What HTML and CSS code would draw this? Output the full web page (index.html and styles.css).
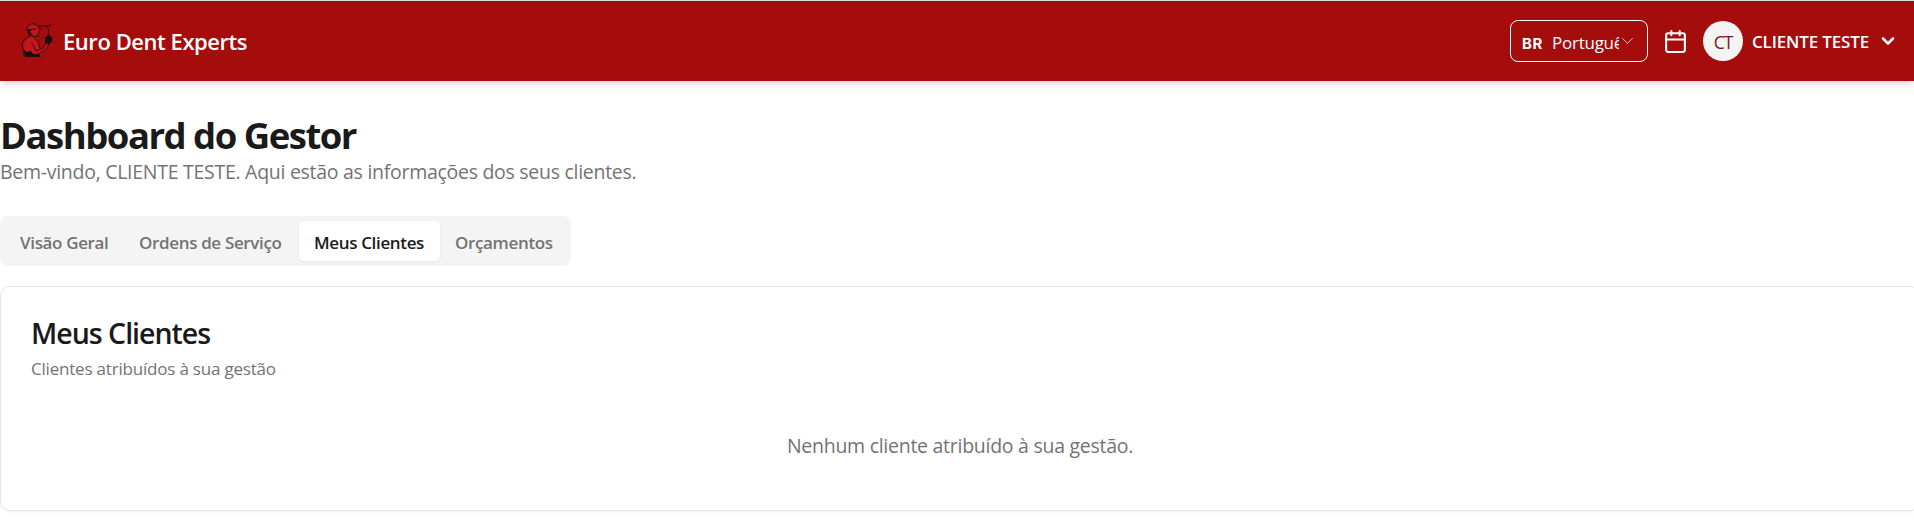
FILE: index.html
```html
<!DOCTYPE html>
<html lang="pt-BR">
<head>
<meta charset="utf-8">
<title>Euro Dent Experts</title>
<link rel="stylesheet" href="styles.css">
</head>
<body>
<header class="header">
  <div class="brand">
    <svg class="logo" viewBox="0 0 34 38" fill="none">
      <path d="M4 34 3 27 2 22 5 18 10 14 15 15 18 20 20 28 25 23 27 17 29 19 25 28 19 33 17 35Z" fill="#c5141b"/>
      <path d="M7 6 9 3 14 2 18 5 18 8 17 12 13 14 8 11Z" fill="#c5141b"/>
      <path d="M6 8C6 3 10 1 13 2 16 2 18 5 18 7L21 7M6 8 15 7M7 9 8 13 14 15 17 14 18 9M9 14 4 17 1 22 2 27 3 33M13 16 17 19 19 26M11 21 15 29 22 26 26 20M17 32 23 29 27 24 29 19M18 4 28 4 30 3M26 4C28 8 28 10 27 13" stroke="#2c1013" stroke-width="1"/>
      <path d="M2 26 5 30 10 29 12 32 18 32 20 35H4ZM24 16 28 12 29 14 31 15 31 20 28 22 24 21ZM7 8 10 8 9 10 12 13 8 12Z" fill="#190f12"/>
    </svg>
    <span class="brand-name">Euro Dent Experts</span>
  </div>
  <div class="actions">
    <div class="language">
      <span class="country">BR</span>
      <span class="language-name">Português</span>
      <svg class="select-arrow" viewBox="0 0 24 24"><path d="m4 7 8 8 8-8"/></svg>
    </div>
    <svg class="calendar" viewBox="0 0 24 24"><rect x="3" y="4" width="18" height="18" rx="2"/><path d="M8 2v4M16 2v4M3 10h18"/></svg>
    <div class="user">
      <span class="avatar">CT</span>
      <span class="user-name">CLIENTE TESTE</span>
      <svg class="user-arrow" viewBox="0 0 24 24"><path d="m6 9 6 6 6-6"/></svg>
    </div>
  </div>
</header>
<main class="main">
  <h1 class="title">Dashboard do Gestor</h1>
  <p class="welcome">Bem-vindo, CLIENTE TESTE. Aqui estão as informações dos seus clientes.</p>
  <nav class="tabs">
    <span class="tab tab-overview">Visão Geral</span>
    <span class="tab tab-orders">Ordens de Serviço</span>
    <span class="tab tab-clients active">Meus Clientes</span>
    <span class="tab tab-quotes">Orçamentos</span>
  </nav>
  <section class="card">
    <h2 class="card-title">Meus Clientes</h2>
    <p class="card-subtitle">Clientes atribuídos à sua gestão</p>
    <p class="empty">Nenhum cliente atribuído à sua gestão.</p>
  </section>
</main>
</body>
</html>
```
FILE: styles.css
```css
* { box-sizing: border-box; }
body {
  margin: 0;
  height: 523px;
  overflow: hidden;
  background: #fff;
  color: #1a1a1a;
  font-family: "Open Sans", "Noto Sans", sans-serif;
}
h1, h2, p { margin: 0; font-weight: 400; white-space: nowrap; }
svg { flex: none; fill: none; stroke-linecap: round; stroke-linejoin: round; }
.header {
  display: flex;
  justify-content: space-between;
  align-items: center;
  height: 81px;
  padding: 0 16px 0 21px;
  border-top: 1px solid #dadada;
  background: #a50c0c;
  color: #fff;
  box-shadow: 0 5px 8px -1px rgba(0, 0, 0, .1), 0 2px 5px -2px rgba(0, 0, 0, .1);
}
.brand { display: flex; align-items: center; gap: 8px; }
.logo { width: 34px; height: 38px; }
.brand-name { font-size: 22px; font-weight: 600; line-height: 30px; letter-spacing: -.45px; white-space: nowrap; }
.actions { display: flex; align-items: center; }
.language {
  display: flex;
  align-items: center;
  width: 138px;
  height: 42px;
  padding: 0 10px;
  border: 1px solid #fff;
  border-radius: 8px;
  font-size: 17px;
}
.country { width: 31px; padding: 4px 0 0 1px; font-family: Inter, sans-serif; font-size: 15px; font-weight: 700; letter-spacing: .5px; }
.language-name { width: 67px; overflow: hidden; letter-spacing: -.25px; padding-top: 2px; }
.select-arrow { width: 15px; height: 15px; margin-left: 1px; stroke: #fff; stroke-width: 1.6; opacity: .7; }
.calendar { width: 25px; height: 25px; margin: 0 15px 0 15px; stroke: #fff; stroke-width: 2; }
.user { display: flex; align-items: center; }
.avatar {
  display: grid;
  place-items: center;
  width: 40px;
  height: 40px;
  padding-top: 2px;
  border-radius: 50%;
  background: #f4f4f4;
  color: #7e1620;
  font-size: 17.5px;
  font-weight: 400;
  letter-spacing: -1px;
}
.user-name { width: 118px; margin-left: 9px; padding-top: 1px; font-size: 17px; font-weight: 600; letter-spacing: -.15px; white-space: nowrap; }
.user-arrow { width: 20px; height: 20px; margin-left: 8px; stroke: #fff; stroke-width: 3; }
.main { width: 1920px; padding-top: 29px; }
.title { font-size: 36.5px; font-weight: 700; line-height: 50px; letter-spacing: -1.5px; }
.welcome { margin-top: 1px; font-size: 19.5px; line-height: 22px; color: #737373; letter-spacing: -.28px; }
.tabs {
  display: flex;
  width: 571px;
  height: 50px;
  margin-top: 33px;
  padding: 5px;
  border-radius: 8px;
  background: #f4f4f4;
  color: #737373;
  font-size: 17px;
  font-weight: 600;
  letter-spacing: -.35px;
}
.tab { height: 40px; padding-left: 15px; line-height: 43px; border-radius: 5px; white-space: nowrap; }
.tab-overview { width: 119px; }
.tab-orders { width: 175px; }
.tab-clients { width: 141px; }
.tab-quotes { width: 126px; }
.active { background: #fff; color: #1a1a1a; box-shadow: 0 1px 3px rgba(0, 0, 0, .06); }
.card {
  height: 225px;
  margin-top: 20px;
  padding: 28px 30px;
  border: 1px solid #e5e5e5;
  border-radius: 10px;
  box-shadow: 0 1px 3px rgba(0, 0, 0, .05);
}
.card-title { font-size: 28.5px; font-weight: 600; line-height: 36px; letter-spacing: -1px; }
.card-subtitle { margin-top: 5px; font-size: 17px; line-height: 25px; color: #737373; letter-spacing: -.2px; }
.empty { margin-top: 50px; text-align: center; font-size: 19.5px; line-height: 30px; color: #737373; letter-spacing: -.27px; }
```
